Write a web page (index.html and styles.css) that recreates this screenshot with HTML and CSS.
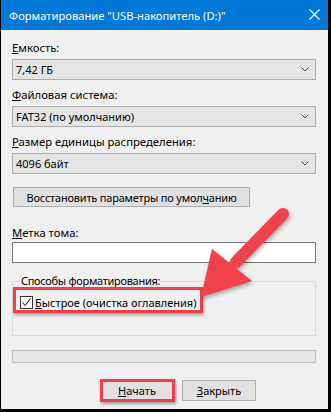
FILE: index.html
```html
<!DOCTYPE html>
<html lang="ru">
<head>
<meta charset="utf-8">
<title>Форматирование</title>
<link rel="stylesheet" href="styles.css">
</head>
<body>
<div class="win">
  <div class="titlebar">
    <span class="title-text">Форматирование "USB-накопитель (D:)"</span>
    <svg class="close" width="11" height="11" viewBox="0 0 11 11"><path d="M0.5 0.5 L10.5 10.5 M10.5 0.5 L0.5 10.5" stroke="#fff" stroke-width="1.1" fill="none"/></svg>
  </div>
  <div class="content">
    <div class="lbl lbl-first"><u>Е</u>мкость:</div>
    <div class="combo"><span>7,42 ГБ</span><svg class="chev" width="8" height="5" viewBox="0 0 8 5"><polyline points="0.5,0.5 4,4 7.5,0.5" fill="none" stroke="#4d4d4d" stroke-width="1"/></svg></div>
    <div class="lbl"><u>Ф</u>айловая система:</div>
    <div class="combo"><span>FAT32 (по умолчанию)</span><svg class="chev" width="8" height="5" viewBox="0 0 8 5"><polyline points="0.5,0.5 4,4 7.5,0.5" fill="none" stroke="#4d4d4d" stroke-width="1"/></svg></div>
    <div class="lbl"><u>Р</u>азмер единицы распределения:</div>
    <div class="combo"><span>4096 байт</span><svg class="chev" width="8" height="5" viewBox="0 0 8 5"><polyline points="0.5,0.5 4,4 7.5,0.5" fill="none" stroke="#4d4d4d" stroke-width="1"/></svg></div>
    <div class="btn restore">Восстановить параметры по умол<u>ч</u>анию</div>
    <div class="lbl lbl-volume"><u>М</u>етка тома:</div>
    <div class="textbox"></div>
    <fieldset class="group">
      <legend>Способы форматирования:</legend>
      <div class="check-row">
        <span class="checkbox"><svg width="11" height="11" viewBox="0 0 11 11"><polyline points="1.5,5.5 4,8.5 9.5,1.5" fill="none" stroke="#333" stroke-width="1.1"/></svg></span>
        <span class="check-label"><u>Б</u>ыстрое (очистка оглавления)</span>
      </div>
    </fieldset>
    <div class="progress"></div>
    <div class="actions">
      <div class="btn action"><u>Н</u>ачать</div>
      <div class="btn action"><u>З</u>акрыть</div>
    </div>
  </div>
  <div class="mark mark-quick"></div>
  <div class="mark mark-start"></div>
  <svg class="arrow" width="331" height="412" viewBox="0 0 331 412">
    <line x1="283" y1="214" x2="236" y2="262" stroke="#f0424a" stroke-width="12" stroke-linecap="round"/>
    <polygon points="212,249 252,281 201,297" fill="#f0424a"/>
  </svg>
</div>
</body>
</html>
```
FILE: styles.css
```css
* { box-sizing: border-box; }
html, body { margin: 0; padding: 0; background: #000; }
body {
  font-family: "Noto Sans", "Liberation Sans", sans-serif;
  font-size: 11px;
  color: #000;
}
u { text-decoration: underline; text-underline-offset: 1px; }
.win {
  position: relative;
  width: 331px;
  height: 412px;
  background: #f0f0f0;
  border-left: 1px solid #000;
  border-right: 3px solid #000;
  border-bottom: 3px solid #000;
  overflow: hidden;
}
.titlebar {
  height: 30px;
  background: #0078d7;
  color: #fff;
  display: flex;
  align-items: center;
  padding: 0 8px 0 8px;
  font-size: 11.2px;
}
.title-text { flex: 1; white-space: nowrap; }
.close { display: block; margin-top: -1px; }
.content {
  display: flex;
  flex-direction: column;
  padding: 0 12px 0 11px;
}
.lbl { line-height: 16px; height: 16px; margin-top: 7px; white-space: nowrap; font-size: 11.3px; }
.lbl-first { margin-top: 10px; }
.combo {
  margin-top: 3px;
  height: 21px;
  background: #e5e5e5;
  border: 1px solid #adadad;
  display: flex;
  align-items: center;
  padding: 0 6px 0 3px;
}
.combo span { flex: 1; }
.chev { display: block; }
.btn {
  background: #e1e1e1;
  border: 1px solid #adadad;
  display: flex;
  align-items: center;
  justify-content: center;
  white-space: nowrap;
}
.restore {
  margin-top: 13px;
  margin-left: 1px;
  width: 237px;
  height: 20px;
  letter-spacing: -0.2px;
}
.lbl-volume { margin-top: 18px; }
.textbox {
  margin-top: 1px;
  height: 21px;
  background: #fff;
  border: 1px solid #7a7a7a;
}
.group {
  margin: 10px 0 0 0;
  padding: 7px 0 26px 7px;
  border: 1px solid #dcdcdc;
  min-inline-size: 0;
}
.group legend {
  padding: 0 1px;
  line-height: 16px;
  letter-spacing: -0.3px;
}
.check-row {
  display: flex;
  align-items: center;
  height: 13px;
  gap: 2px;
}
.checkbox {
  width: 13px;
  height: 13px;
  background: #fff;
  border: 1px solid #333;
  display: flex;
  align-items: center;
  justify-content: center;
}
.checkbox svg { display: block; }
.check-label { white-space: nowrap; line-height: 16px; font-size: 11px; }
.progress {
  margin-top: 14px;
  height: 13px;
  background: #e6e6e6;
  border: 1px solid #bcbcbc;
}
.actions {
  margin-top: 17px;
  margin-left: 88px;
  display: flex;
  gap: 8px;
}
.action { width: 74px; height: 21px; }
.mark {
  position: absolute;
  border: 3px solid #ee3f48;
  box-shadow: 1px 2px 3px rgba(0,0,0,0.35);
}
.mark-quick { left: 12px; top: 287px; width: 190px; height: 26px; }
.mark-start { left: 99px; top: 379px; width: 75px; height: 23px; }
.arrow {
  position: absolute;
  left: -1px;
  top: 0;
  filter: drop-shadow(1px 2px 2px rgba(0,0,0,0.35));
}
```
